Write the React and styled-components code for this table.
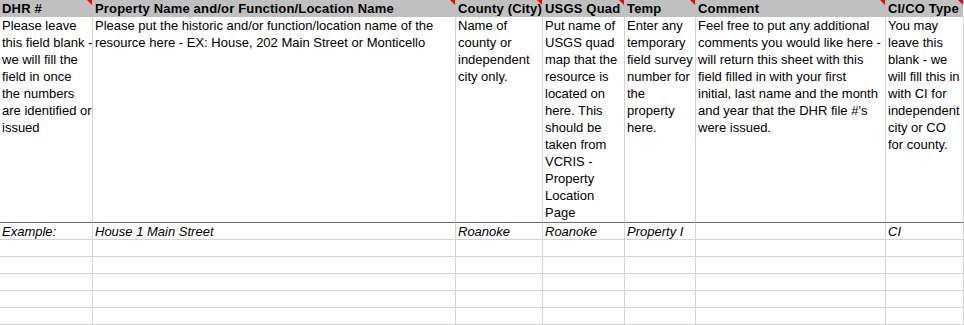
import React from 'react'
import styled, { createGlobalStyle } from 'styled-components'

const GlobalStyle = createGlobalStyle`
    html, body {
        margin: 0;
        padding: 0;
        background: #ffffff;
    }
    body {
        font-family: "Liberation Sans", Arial, sans-serif;
        font-size: 13px;
        color: #000000;
    }
`

const columns = [
    {
        title: 'DHR #',
        width: 93,
        help: ['Please leave', 'this field blank -', 'we will fill the', 'field in once', 'the numbers', 'are identified or', 'issued'],
        example: 'Example:',
    },
    {
        title: 'Property Name and/or Function/Location Name',
        width: 363,
        help: ['Please put the historic and/or function/location name of the', 'resource here - EX: House, 202 Main Street or Monticello'],
        example: 'House 1 Main Street',
    },
    {
        title: 'County (City)',
        width: 87,
        help: ['Name of', 'county or', 'independent', 'city only.'],
        example: 'Roanoke',
    },
    {
        title: 'USGS Quad',
        width: 82,
        help: ['Put name of', 'USGS quad', 'map that the', 'resource is', 'located on', 'here. This', 'should be', 'taken from', 'VCRIS -', 'Property', 'Location', 'Page'],
        example: 'Roanoke',
    },
    {
        title: 'Temp',
        width: 71,
        help: ['Enter any', 'temporary', 'field survey', 'number for', 'the', 'property', 'here.'],
        example: 'Property I',
    },
    {
        title: 'Comment',
        width: 190,
        help: ['Feel free to put any additional', 'comments you would like here -', 'will return this sheet with this', 'field filled in with your first', 'initial, last name and the month', "and year that the DHR file #'s", 'were issued.'],
        example: '',
    },
    {
        title: 'CI/CO Type',
        width: 78,
        help: ['You may', 'leave this', 'blank - we', 'will fill this in', 'with CI for', 'independent', 'city or CO', 'for county.'],
        example: 'CI',
    },
]

const blankRows = [1, 2, 3, 4, 5]

const App = () => {
    return (
        <>
            <GlobalStyle />
            <Sheet $cols={columns.map((c) => c.width + 'px').join(' ')}>
                {columns.map((c) => (
                    <HeadCell key={'h' + c.title}>
                        {c.title}
                        <CommentMark />
                    </HeadCell>
                ))}
                {columns.map((c) => (
                    <Cell key={'d' + c.title} $divider>
                        {c.help.join('\n')}
                    </Cell>
                ))}
                {columns.map((c) => (
                    <Cell key={'e' + c.title} $italic>
                        {c.example}
                    </Cell>
                ))}
                {blankRows.map((r) =>
                    columns.map((c) => <Cell key={r + c.title} />)
                )}
            </Sheet>
        </>
    )
}

export default App

const Sheet = styled.div`
    display: grid;
    grid-template-columns: ${(p) => p.$cols};
    grid-template-rows: 17px 206px repeat(6, 17px);
    width: 964px;
    height: 325px;
    overflow: hidden;
`

const HeadCell = styled.div`
    position: relative;
    box-sizing: border-box;
    background: #c0c0c0;
    border-right: 1px solid #c0c0c0;
    padding: 0 2px;
    font-weight: bold;
    letter-spacing: 0.18px;
    line-height: 17px;
    white-space: nowrap;
    overflow: hidden;

    &:nth-child(7) {
        border-right-color: #ffffff;
    }
`

const CommentMark = styled.span`
    position: absolute;
    top: 0;
    right: 0;
    width: 0;
    height: 0;
    border-top: 5px solid #ff0000;
    border-left: 5px solid transparent;
`

const Cell = styled.div`
    box-sizing: border-box;
    border-right: 1px solid #d4d4d4;
    border-bottom: 1px solid ${(p) => (p.$divider ? '#6b6b6b' : '#d4d4d4')};
    padding: 0 2px;
    line-height: 17px;
    font-style: ${(p) => (p.$italic ? 'italic' : 'normal')};
    white-space: pre;
    overflow: hidden;
`
